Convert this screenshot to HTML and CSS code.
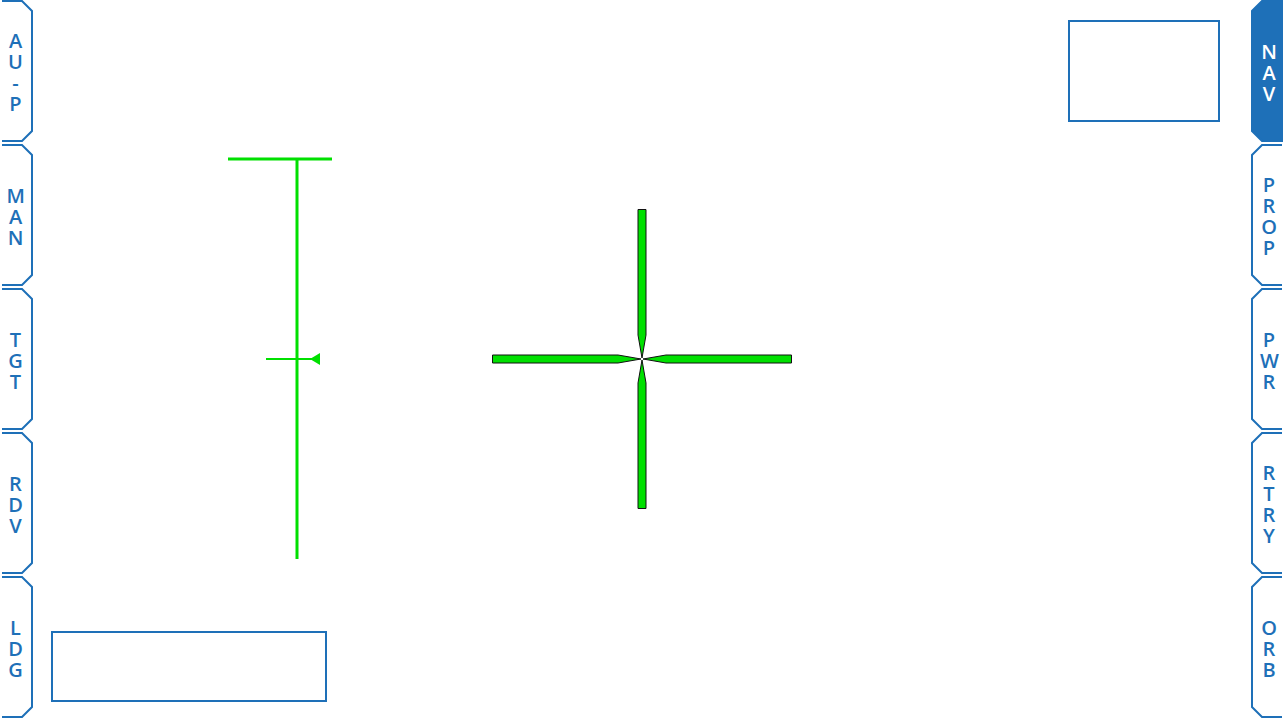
FILE: index.html
```html
<!DOCTYPE html>
<html lang="en">
<head>
<meta charset="utf-8">
<meta name="viewport" content="width=device-width, initial-scale=1">
<title>NAV</title>
<link rel="stylesheet" href="styles.css">
</head>
<body>
<svg width="0" height="0" class="defs" aria-hidden="true">
  <symbol id="tab-left" viewBox="0 0 33 142" preserveAspectRatio="none">
    <path d="M2 1H22L32 11V131L22 141H2"/>
  </symbol>
  <symbol id="tab-right" viewBox="0 0 32 142" preserveAspectRatio="none">
    <path d="M31 1H11L1 11V131L11 141H31"/>
  </symbol>
  <symbol id="tab-full" viewBox="0 0 32 142" preserveAspectRatio="none">
    <path d="M33 1H11L1 11V131L11 141H33Z"/>
  </symbol>
</svg>
<div class="display">
  <nav class="tabs tabs-left">
    <button class="tab" type="button"><svg class="tab-shape"><use href="#tab-left"/></svg><span class="label">AU-P</span></button>
    <button class="tab" type="button"><svg class="tab-shape"><use href="#tab-left"/></svg><span class="label">MAN</span></button>
    <button class="tab" type="button"><svg class="tab-shape"><use href="#tab-left"/></svg><span class="label">TGT</span></button>
    <button class="tab" type="button"><svg class="tab-shape"><use href="#tab-left"/></svg><span class="label">RDV</span></button>
    <button class="tab" type="button"><svg class="tab-shape"><use href="#tab-left"/></svg><span class="label">LDG</span></button>
  </nav>
  <main class="hud">
    <svg class="gauge" viewBox="0 0 104 404">
      <path class="scale" d="M0 2H104M69 2V402"/>
      <path class="marker" d="M38 202H84"/>
      <path class="pointer" d="M82 202L92 196V208Z"/>
    </svg>
    <div class="panel panel-bottom"></div>
    <svg class="crosshair" viewBox="0 0 302 302">
      <path d="M1.5 147H127L150 151L127 155H1.5Z"/>
      <path d="M300.5 147H175L152 151L175 155H300.5Z"/>
      <path d="M147 1.5V127L151 150L155 127V1.5Z"/>
      <path d="M147 300.5V175L151 152L155 175V300.5Z"/>
    </svg>
    <div class="panel panel-top"></div>
  </main>
  <nav class="tabs tabs-right">
    <button class="tab active" type="button" aria-current="page"><svg class="tab-shape"><use href="#tab-full"/></svg><span class="label">NAV</span></button>
    <button class="tab" type="button"><svg class="tab-shape"><use href="#tab-right"/></svg><span class="label">PROP</span></button>
    <button class="tab" type="button"><svg class="tab-shape"><use href="#tab-right"/></svg><span class="label">PWR</span></button>
    <button class="tab" type="button"><svg class="tab-shape"><use href="#tab-right"/></svg><span class="label">RTRY</span></button>
    <button class="tab" type="button"><svg class="tab-shape"><use href="#tab-right"/></svg><span class="label">ORB</span></button>
  </nav>
</div>
</body>
</html>
```
FILE: styles.css
```css
* {
  box-sizing: border-box;
}

body {
  margin: 0;
  background: #fff;
  font-family: "Open Sans", "Noto Sans", sans-serif;
}

.defs {
  position: absolute;
}

.display {
  display: grid;
  grid-template-columns: 33px 1fr 32px;
  min-height: 100vh;
}

.tabs {
  display: flex;
  flex-direction: column;
  gap: 2px;
}

.tab {
  position: relative;
  flex: 1;
  display: flex;
  align-items: center;
  justify-content: center;
  border: 0;
  padding: 2px 0 0;
  background: none;
  color: #1e70b8;
  font: 600 20px/21px "Open Sans", "Noto Sans", sans-serif;
  cursor: pointer;
}

.tabs-left .tab {
  padding-right: 2px;
}

.tabs-right .tab {
  padding-left: 4px;
}

.tab-shape {
  position: absolute;
  inset: 0;
  width: 100%;
  height: 100%;
  fill: none;
  stroke: #1e70b8;
  stroke-width: 2px;
}

.active {
  color: #fff;
}

.active .tab-shape {
  fill: #1e70b8;
}

.label {
  position: relative;
  width: 18px;
  line-break: anywhere;
  text-align: center;
}

.hud {
  display: grid;
  grid-template-columns: 1fr 302px 1fr;
  align-items: center;
}

.gauge,
.panel-bottom,
.crosshair,
.panel-top {
  grid-row: 1;
}

.gauge {
  grid-column: 1;
  justify-self: end;
  width: 104px;
  height: 404px;
  margin-right: 159px;
  fill: none;
  stroke: #00e000;
}

.scale {
  stroke-width: 3px;
}

.marker {
  stroke-width: 2px;
}

.pointer {
  fill: #00e000;
  stroke: none;
}

.crosshair {
  grid-column: 2;
  width: 302px;
  height: 302px;
  fill: #00e000;
  stroke: #111;
  stroke-width: 1px;
}

.panel {
  border: 2px solid #1e70b8;
}

.panel-bottom {
  grid-column: 1;
  align-self: end;
  width: 276px;
  height: 71px;
  margin: 0 0 16px 18px;
}

.panel-top {
  grid-column: 3;
  align-self: start;
  justify-self: end;
  width: 152px;
  height: 102px;
  margin: 20px 31px 0 0;
}
```
